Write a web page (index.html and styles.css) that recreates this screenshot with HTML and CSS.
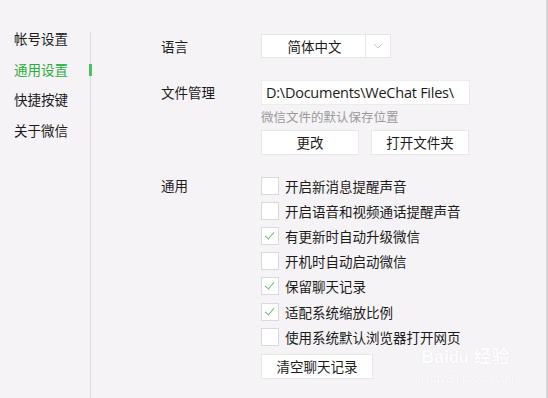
FILE: index.html
```html
<!DOCTYPE html>
<html lang="zh-CN">
<head>
<meta charset="utf-8">
<link rel="stylesheet" href="styles.css">
</head>
<body>
<div class="window">
  <nav class="sidebar">
    <div class="nav-item">帐号设置</div>
    <div class="nav-item active">通用设置</div>
    <div class="nav-item">快捷按键</div>
    <div class="nav-item">关于微信</div>
  </nav>
  <div class="divider"><span class="indicator"></span></div>
  <main class="content">
    <section class="row row-lang">
      <div class="label">语言</div>
      <div class="field">
        <div class="select">
          <span class="select-text">简体中文</span>
          <span class="select-arrow">
            <svg width="10" height="6" viewBox="0 0 10 6"><path d="M1 1 L5 5 L9 1" fill="none" stroke="#c8c8c8" stroke-width="1"/></svg>
          </span>
        </div>
      </div>
    </section>
    <section class="row row-files">
      <div class="label">文件管理</div>
      <div class="field">
        <div class="path">D:\Documents\WeChat Files\</div>
        <div class="hint">微信文件的默认保存位置</div>
        <div class="btn-row">
          <button class="btn btn-wide">更改</button>
          <button class="btn btn-wide">打开文件夹</button>
        </div>
      </div>
    </section>
    <section class="row row-general">
      <div class="label">通用</div>
      <div class="field">
        <ul class="checks">
          <li><span class="box"></span>开启新消息提醒声音</li>
          <li><span class="box"></span>开启语音和视频通话提醒声音</li>
          <li><span class="box checked"></span>有更新时自动升级微信</li>
          <li><span class="box"></span>开机时自动启动微信</li>
          <li><span class="box checked"></span>保留聊天记录</li>
          <li><span class="box checked"></span>适配系统缩放比例</li>
          <li><span class="box"></span>使用系统默认浏览器打开网页</li>
        </ul>
        <button class="btn btn-clear">清空聊天记录</button>
      </div>
    </section>
  </main>
  <div class="edge"></div>
  <div class="watermark">
    <div class="wm-logo">Bai<span class="wm-du">du</span> 经验</div>
    <div class="wm-url">jingyan.baidu.com</div>
  </div>
</div>
</body>
</html>
```
FILE: styles.css
```css
* { box-sizing: border-box; margin: 0; padding: 0; }
html, body { width: 548px; height: 398px; overflow: hidden; }
body {
  background: #f5f3f6;
  font-family: "Noto Sans CJK SC", "Noto Sans", sans-serif;
  color: #1b1b1b;
  font-size: 13px;
}
.window { display: flex; height: 398px; position: relative; }
.sidebar {
  width: 90px;
  padding: 27px 0 0 14px;
  display: flex;
  flex-direction: column;
}
.nav-item { height: 30.7px; line-height: 22px; font-size: 13.5px; }
.nav-item.active { color: #2aae3c; }
.divider {
  position: relative;
  width: 1px;
  margin-top: 32px;
  background: #dcdadc;
}
.indicator {
  position: absolute;
  left: -1px;
  top: 32px;
  width: 3px;
  height: 12px;
  background: #4cc05a;
}
.content { flex: 1; padding: 34px 0 0 70px; }
.row { display: flex; }
.label { width: 100px; font-size: 13.5px; line-height: 24px; }
.field { display: flex; flex-direction: column; }
.row-files { margin-top: 22px; }
.row-general { margin-top: 18px; }
.select {
  width: 130px;
  height: 24px;
  display: flex;
  background: #fff;
  border: 1px solid #e6e6e6;
}
.select-text {
  flex: 1;
  text-align: center;
  line-height: 22px;
  font-size: 13.5px;
  padding-left: 2px;
}
.select-arrow {
  width: 25px;
  border-left: 1px solid #e6e6e6;
  display: flex;
  align-items: center;
  justify-content: center;
}
.path {
  width: 209px;
  height: 25px;
  background: #fff;
  border: 1px solid #ececec;
  padding-left: 4px;
  line-height: 23px;
  font-family: "Open Sans", "Noto Sans", sans-serif;
  font-size: 14.5px;
  letter-spacing: -0.25px;
  white-space: nowrap;
  overflow: hidden;
}
.hint { color: #9a9a9a; font-size: 12.5px; line-height: 22px; margin-top: 1px; }
.btn-row { display: flex; gap: 12px; margin-top: 2px; }
.btn {
  height: 25px;
  background: #fff;
  border: 1px solid #e8e8e8;
  font-family: inherit;
  font-size: 13.5px;
  color: #1b1b1b;
  line-height: 23px;
}
.btn-wide { width: 98px; }
.checks { list-style: none; }
.checks li {
  display: flex;
  align-items: center;
  height: 25.2px;
  font-size: 13.5px;
  gap: 6px;
}
.box {
  width: 18px;
  height: 18px;
  background: #fff;
  border: 1px solid #dadada;
  position: relative;
}
.box.checked::after {
  content: "";
  position: absolute;
  left: 5px;
  top: 2px;
  width: 4px;
  height: 8px;
  border-right: 1px solid #6fbf78;
  border-bottom: 1px solid #6fbf78;
  transform: rotate(40deg);
}
.btn-clear { width: 112px; margin-top: 5px; }
.edge { width: 2px; background: #d8d6d8; }
.watermark {
  position: absolute;
  left: 421px;
  top: 347px;
  color: #ffffff;
  opacity: 0.9;
  pointer-events: none;
  white-space: nowrap;
}
.wm-logo {
  font-family: "Liberation Sans", "Noto Sans CJK SC", sans-serif;
  font-weight: bold;
  font-size: 18px;
  line-height: 20px;
  text-shadow: 0 0 1px #dddbe0;
}
.wm-du { font-size: 16px; }
.wm-url {
  font-family: "Liberation Sans", sans-serif;
  font-size: 12px;
  line-height: 14px;
  margin-top: 3px;
  text-shadow: 0 0 1px #dddbe0;
}
```
